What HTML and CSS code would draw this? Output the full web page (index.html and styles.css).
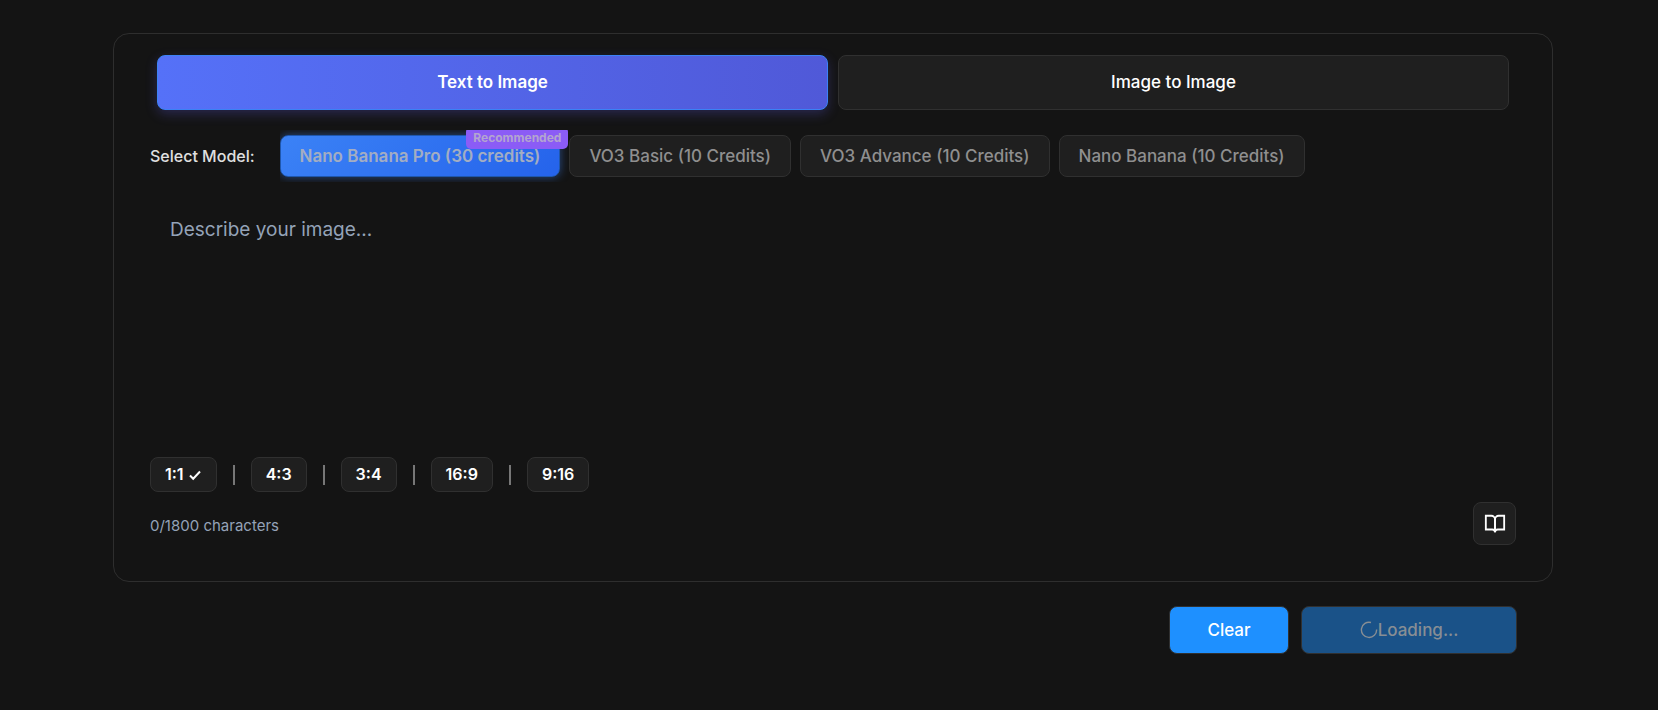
FILE: index.html
```html
<!DOCTYPE html>
<html lang="en">
<head>
    <meta charset="UTF-8">
    <meta name="viewport" content="width=device-width, initial-scale=1.0">
    <title>Text to Image</title>
    <link rel="stylesheet" href="styles.css">
</head>
<body>
    <main class="page">
        <section class="card">
            <div class="tabs">
                <button type="button" class="tab active">Text to Image</button>
                <button type="button" class="tab">Image to Image</button>
            </div>

            <div class="model-row">
                <span class="model-label" id="modelLabel">Select Model:</span>
                <div class="models" role="group" aria-labelledby="modelLabel">
                    <button type="button" class="model selected" disabled>Nano Banana Pro (30 credits)<span class="badge">Recommended</span></button>
                    <button type="button" class="model" disabled>VO3 Basic (10 Credits)</button>
                    <button type="button" class="model" disabled>VO3 Advance (10 Credits)</button>
                    <button type="button" class="model" disabled>Nano Banana (10 Credits)</button>
                </div>
            </div>

            <textarea class="prompt" maxlength="1800" placeholder="Describe your image..." aria-label="Describe your image"></textarea>

            <div class="ratios">
                <button type="button" class="ratio">1:1
                    <svg class="check" viewBox="0 0 14 14" aria-hidden="true"><path d="M2 7.5 L5.2 10.7 L12 3.5"/></svg>
                </button>
                <span class="divider"></span>
                <button type="button" class="ratio">4:3</button>
                <span class="divider"></span>
                <button type="button" class="ratio">3:4</button>
                <span class="divider"></span>
                <button type="button" class="ratio">16:9</button>
                <span class="divider"></span>
                <button type="button" class="ratio">9:16</button>
            </div>

            <div class="card-footer">
                <span class="counter">0/1800 characters</span>
                <button type="button" class="library" aria-label="Prompt library">
                    <svg viewBox="0 0 24 24" aria-hidden="true">
                        <path d="M2 3h6a4 4 0 0 1 4 4v14a3 3 0 0 0-3-3H2z"/>
                        <path d="M22 3h-6a4 4 0 0 0-4 4v14a3 3 0 0 1 3-3h7z"/>
                    </svg>
                </button>
            </div>
        </section>

        <div class="actions">
            <button type="button" class="action">Clear</button>
            <button type="button" class="action generate" disabled>
                <svg class="spinner" viewBox="0 0 18 18" aria-hidden="true"><path d="M11 1.5 A7.6 7.6 0 1 0 16.6 8.5"/></svg>Loading...
            </button>
        </div>
    </main>
</body>
</html>
```

FILE: styles.css
```css
* {
    box-sizing: border-box;
}

body {
    margin: 0;
    background: #141414;
    color: #fff;
    font-family: Inter, "Liberation Sans", sans-serif;
}

button {
    font-family: inherit;
    color: #fff;
    cursor: pointer;
    border: 1px solid #303030;
    border-radius: 8px;
    background: #1f1f1f;
}

button:disabled {
    cursor: not-allowed;
}

.page {
    padding: 33px 0 56px 8px;
}

.card {
    max-width: 1440px;
    margin: 0 auto;
    padding: 21px 36px 36px;
    border: 1px solid #2e2e2e;
    border-radius: 16px;
}

.tabs {
    display: grid;
    grid-template-columns: 1fr 1fr;
    gap: 10px;
    padding: 0 7px;
}

.tab {
    height: 55px;
    padding: 0 0 2px;
    font-size: 17px;
    font-weight: 500;
}

.tab.active {
    border-color: #3b82f6;
    background: linear-gradient(90deg, #5571f8, #5059d8);
    box-shadow: 0 4px 12px rgba(88, 86, 214, 0.3);
    font-weight: 600;
}

.model-row {
    display: flex;
    align-items: center;
    gap: 25px;
    margin-top: 20px;
}

.model-label {
    font-size: 16px;
    font-weight: 500;
    color: #e0e0e0;
}

.models {
    display: flex;
    flex: 1;
    gap: 9px;
    padding: 5px 0;
    overflow: hidden;
}

.model {
    position: relative;
    height: 42px;
    padding: 0 19px;
    font-size: 17px;
    font-weight: 500;
    white-space: nowrap;
    color: #8f8f8f;
}

.model.selected {
    border-color: #1f57ad;
    background: linear-gradient(135deg, #3b82f6, #2563eb);
    box-shadow: 0 0 10px rgba(59, 130, 246, 0.5);
    font-weight: 600;
    color: #a3adc2;
}

.badge {
    position: absolute;
    top: -9px;
    right: -9px;
    padding: 0 7px;
    border-radius: 5px;
    background: #8b5cf6;
    color: #b3a5cf;
    font-size: 12px;
    font-weight: 700;
    line-height: 22px;
}

.prompt {
    display: block;
    width: 100%;
    height: 255px;
    margin-top: 20px;
    padding: 16px 20px;
    border: none;
    outline: none;
    resize: none;
    background: transparent;
    color: #fff;
    font-family: inherit;
    font-size: 19px;
    line-height: 24px;
}

.prompt::placeholder {
    color: #94a3b8;
}

.ratios {
    display: flex;
    align-items: center;
    gap: 16px;
}

.ratio {
    height: 35px;
    padding: 0 14px 2px;
    font-size: 16px;
    font-weight: 600;
}

.check {
    width: 14px;
    height: 14px;
    vertical-align: -2px;
    fill: none;
    stroke: #fff;
    stroke-width: 2;
}

.divider {
    width: 2px;
    height: 20px;
    background: #777;
}

.card-footer {
    display: flex;
    align-items: center;
    justify-content: space-between;
    margin-top: 10px;
}

.counter {
    padding-top: 4px;
    font-size: 15px;
    color: #94a3b8;
}

.library {
    display: flex;
    align-items: center;
    justify-content: center;
    width: 43px;
    height: 43px;
    padding: 0;
}

.library svg {
    width: 22px;
    height: 22px;
    fill: none;
    stroke: #fff;
    stroke-width: 2;
}

.actions {
    display: flex;
    justify-content: flex-end;
    gap: 12px;
    max-width: 1440px;
    margin: 24px auto 0;
    padding: 0 36px;
}

.action {
    display: flex;
    align-items: center;
    justify-content: center;
    min-width: 120px;
    height: 48px;
    background: #1e90ff;
    font-size: 17px;
    font-weight: 500;
}

.generate {
    min-width: 216px;
    background: #1a5288;
    color: #888e94;
}

.spinner {
    width: 18px;
    height: 18px;
    fill: none;
    stroke: #888e94;
    stroke-width: 1.4;
}
```
